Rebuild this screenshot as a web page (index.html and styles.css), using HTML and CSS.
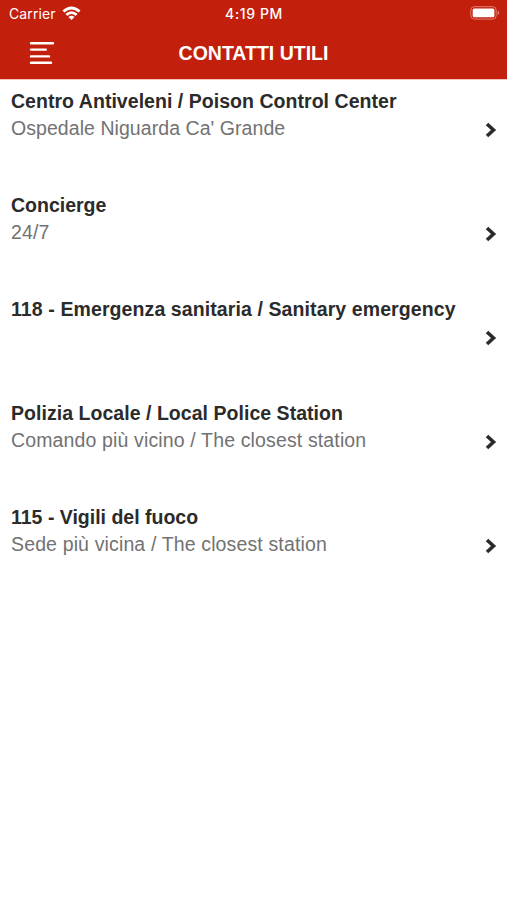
FILE: index.html
```html
<!DOCTYPE html>
<html lang="it">
<head>
<meta charset="utf-8">
<title>Contatti utili</title>
<link rel="stylesheet" href="styles.css">
</head>
<body>
<header class="top">
  <div class="status">
    <div class="carrier"><span>Carrier</span>
      <svg class="wifi" width="19" height="14" viewBox="0 0 20 14" fill="none" stroke="#fff" stroke-width="3"><path d="M1.500 5.400Q10-2 18.500 5.400M4.600 8.900Q10 4.300 15.400 8.900"/><path d="M10 14.300 6.800 11.200Q10 8.600 13.200 11.200Z" fill="#fff" stroke="none"/></svg>
    </div>
    <span class="clock">4:19 PM</span>
    <svg class="battery" width="30" height="14" viewBox="0 0 30 14"><rect x=".8" y=".7" width="25.400" height="12.400" rx="3.500" fill="none" stroke="#e07d70"/><rect x="2.700" y="2.500" width="21.700" height="8.800" rx="1.500" fill="#fff"/><path d="M27.700 4.500q3.200 2.400 0 4.800z" fill="#e07d70"/></svg>
  </div>
  <div class="nav">
    <svg class="menu" width="26" height="24" viewBox="0 0 26 24" stroke="#fff" stroke-width="2.400" stroke-linecap="round"><path d="M2 2.200H24M2 8.600H16.800M2 15.400H20M2 21.700H22"/></svg>
    <h1 class="heading">CONTATTI UTILI</h1>
  </div>
</header>
<main class="list">
  <div class="row"><div class="copy"><div class="name snug">Centro Antiveleni / Poison Control Center</div><div class="sub snug">Ospedale Niguarda Ca' Grande</div></div><svg class="chev" width="12" height="16" viewBox="0 0 12 16"><path d="M2 2 8.500 8 2 14"/></svg></div>
  <div class="row"><div class="copy"><div class="name">Concierge</div><div class="sub">24/7</div></div><svg class="chev" width="12" height="16" viewBox="0 0 12 16"><path d="M2 2 8.500 8 2 14"/></svg></div>
  <div class="row"><div class="copy"><div class="name loose">118 - Emergenza sanitaria / Sanitary emergency</div></div><svg class="chev" width="12" height="16" viewBox="0 0 12 16"><path d="M2 2 8.500 8 2 14"/></svg></div>
  <div class="row"><div class="copy"><div class="name snug">Polizia Locale / Local Police Station</div><div class="sub">Comando più vicino / The closest station</div></div><svg class="chev" width="12" height="16" viewBox="0 0 12 16"><path d="M2 2 8.500 8 2 14"/></svg></div>
  <div class="row"><div class="copy"><div class="name">115 - Vigili del fuoco</div><div class="sub">Sede più vicina / The closest station</div></div><svg class="chev" width="12" height="16" viewBox="0 0 12 16"><path d="M2 2 8.500 8 2 14"/></svg></div>
</main>
</body>
</html>
```
FILE: styles.css
```css
body { margin: 0; background: #fff; font-family: "Liberation Sans", Arial, sans-serif; }
svg { display: block; flex: none; }
.top { height: 80px; box-sizing: border-box; background: #c2200d; border-bottom: 1px solid #f5c4bc; color: #fff; }
.status { display: grid; grid-template-columns: 1fr auto 1fr; height: 27px; padding: 3px 7px 0 9px; box-sizing: border-box; line-height: 21px; white-space: nowrap; }
.carrier { display: flex; gap: 6px; font-family: Inter, sans-serif; font-size: 14px; letter-spacing: .1px; }
.wifi { margin-top: 3px; }
.clock { font-family: Inter, sans-serif; font-size: 14px; font-weight: 500; letter-spacing: .6px; margin-left: -1px; }
.battery { justify-self: end; margin-top: 3px; }
.nav { display: grid; grid-template-columns: 1fr auto 1fr; align-items: center; height: 52px; }
.menu { margin-left: 29px; }
.heading { margin: 0; font-size: 19.5px; font-weight: bold; line-height: 26px; }
.list { padding-top: 8px; }
.row { display: flex; height: 103.9px; padding: 0 10px 0 11px; box-sizing: border-box; justify-content: space-between; }
.copy { white-space: nowrap; line-height: 27px; font-size: 19.5px; }
.name { font-weight: bold; color: #2b2b2b; }
.name.snug { letter-spacing: .04px; }
.name.loose { letter-spacing: .1px; }
.sub { color: #727272; letter-spacing: .14px; }
.sub.snug { letter-spacing: .06px; }
.chev { margin-top: 34px; fill: none; stroke: #2b2b2b; stroke-width: 3.6; }
```
